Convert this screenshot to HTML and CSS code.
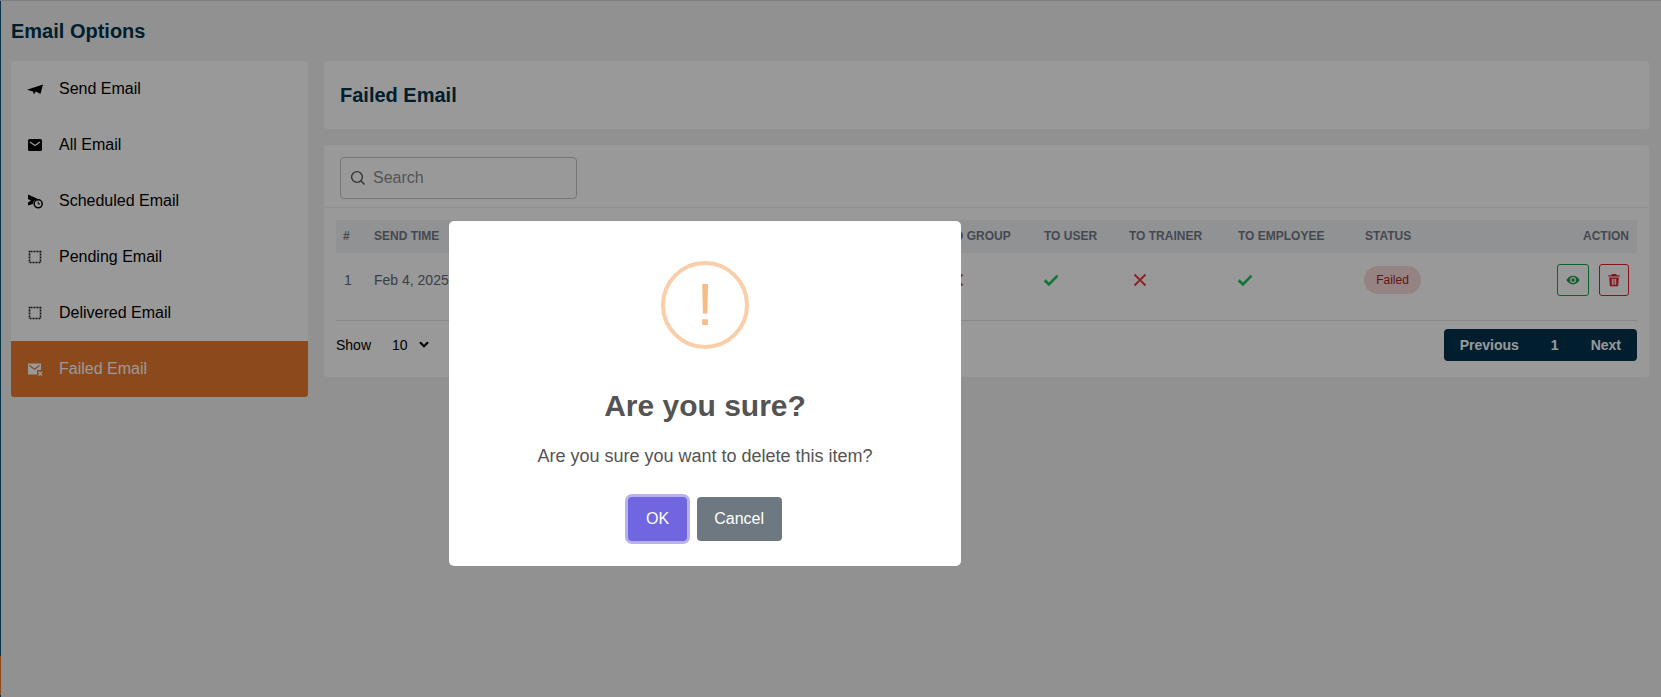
FILE: index.html
```html
<!DOCTYPE html>
<html lang="en">
<head>
<meta charset="utf-8">
<title>Failed Email</title>
<link rel="stylesheet" href="styles.css">
</head>
<body>
<div class="app">
  <div class="rail"><div class="rail-active"></div></div>
  <div class="page">
    <h1 class="page-title">Email Options</h1>
    <div class="columns">
      <nav class="side">
        <a class="side-item">
          <svg class="side-icon" viewBox="0 0 16 16"><path d="M0 8.800 16 3.600 13.400 13 9 10.600 6.800 13.200 6 10.400Z"/></svg>
          <span>Send Email</span>
        </a>
        <a class="side-item">
          <svg class="side-icon" viewBox="0 0 16 16"><rect x="1" y="2" width="14" height="12" rx="1.500"/><path d="M3 5 8 8.400 13 5" fill="none" stroke="#fff" stroke-width="1.200"/></svg>
          <span>All Email</span>
        </a>
        <a class="side-item">
          <svg class="side-icon" viewBox="0 0 16 16"><path d="M1 1.500 11 6 7.500 7.500A5 5 0 0 0 6 11L1 12.500 1 9.500 4 7.500 1 6Z"/><circle cx="11.200" cy="10.800" r="4" fill="none" stroke="#000" stroke-width="1.500"/><path d="M11.200 8.600V11H13" fill="none" stroke="#000" stroke-width="1"/></svg>
          <span>Scheduled Email</span>
        </a>
        <a class="side-item">
          <svg class="side-icon" viewBox="0 0 16 16"><rect x="2.500" y="2.500" width="11" height="11" class="dotted"/></svg>
          <span>Pending Email</span>
        </a>
        <a class="side-item">
          <svg class="side-icon" viewBox="0 0 16 16"><rect x="2.500" y="2.500" width="11" height="11" class="dotted"/></svg>
          <span>Delivered Email</span>
        </a>
        <a class="side-item is-active">
          <svg class="side-icon" viewBox="0 0 16 16"><path d="M1 2.500H14V9H10V13.500H1Z" fill="#fff"/><path d="M2.500 4.500 7.500 8.300 12.500 4.500" fill="none" stroke="#e97b2f" stroke-width="1.300"/><path d="M11.500 10.800 15 14.500M15 10.800 11.500 14.500" fill="none" stroke="#fff" stroke-width="1.400"/></svg>
          <span>Failed Email</span>
        </a>
      </nav>
      <main class="content">
        <header class="card head-card"><h2 class="head-title">Failed Email</h2></header>
        <section class="card table-card">
          <div class="toolbar">
            <label class="search">
              <svg class="search-icon" viewBox="0 0 16 16"><circle cx="7" cy="7" r="5.400" fill="none" stroke="#555" stroke-width="1.400"/><path d="M11 11 14.600 14.600" stroke="#555" stroke-width="1.400"/></svg>
              <input class="search-input" type="text" placeholder="Search">
            </label>
          </div>
          <div class="table-wrap">
            <table class="grid">
              <colgroup>
                <col class="c-num"><col class="c-time"><col class="c-subject"><col class="c-group"><col class="c-user"><col class="c-trainer"><col class="c-emp"><col class="c-status"><col class="c-action">
              </colgroup>
              <thead>
                <tr><th>#</th><th>SEND TIME</th><th>SUBJECT</th><th>TO GROUP</th><th>TO USER</th><th>TO TRAINER</th><th>TO EMPLOYEE</th><th>STATUS</th><th class="right">ACTION</th></tr>
              </thead>
              <tbody>
                <tr>
                  <td class="num">1</td>
                  <td>Feb 4, 2025</td>
                  <td>Test email</td>
                  <td class="inset-g"><svg class="mark" viewBox="0 0 14 14"><path d="M1.500 1.500 12.500 12.500M12.500 1.500 1.500 12.500" class="cross"/></svg></td>
                  <td><svg class="mark" viewBox="0 0 14 14"><path d="M.6 7.400 5 11.400 13.500 2.600" class="tick"/></svg></td>
                  <td class="inset"><svg class="mark" viewBox="0 0 14 14"><path d="M1.500 1.500 12.500 12.500M12.500 1.500 1.500 12.500" class="cross"/></svg></td>
                  <td><svg class="mark" viewBox="0 0 14 14"><path d="M.6 7.400 5 11.400 13.500 2.600" class="tick"/></svg></td>
                  <td class="status"><span class="badge">Failed</span></td>
                  <td class="right">
                    <div class="actions">
                      <button class="act act-view" type="button"><svg viewBox="0 0 16 16" class="act-icon"><path fill="currentColor" fill-rule="evenodd" d="M8 3C4.600 3 1.800 5.200.5 8c1.300 2.800 4.100 5 7.500 5s6.200-2.200 7.500-5C14.200 5.200 11.400 3 8 3Zm0 8.400A3.400 3.400 0 1 1 8 4.600a3.400 3.400 0 0 1 0 6.800Z"/><circle cx="8" cy="8" r="2" fill="currentColor"/></svg></button>
                      <button class="act act-del" type="button"><svg viewBox="0 0 16 16" class="act-icon"><path fill="currentColor" fill-rule="evenodd" d="M5.500 1h5l.6 1.500H14.500V4H1.500V2.500H4.900ZM2.500 5h11l-.8 10H3.300ZM5.500 6.500V13.500H6.700V6.500ZM7.400 6.500V13.500H8.600V6.500ZM9.300 6.500V13.500H10.500V6.500Z"/></svg></button>
                    </div>
                  </td>
                </tr>
              </tbody>
            </table>
            <div class="foot">
              <div class="show">
                <span>Show</span>
                <span class="show-value">10</span>
                <svg class="chev" viewBox="0 0 10 7"><path d="M1 1.200 5 5.200 9 1.200" fill="none" stroke="#000" stroke-width="2.200"/></svg>
              </div>
              <div class="pager">
                <button class="pg" type="button">Previous</button>
                <button class="pg" type="button">1</button>
                <button class="pg" type="button">Next</button>
              </div>
            </div>
          </div>
        </section>
      </main>
    </div>
  </div>
</div>

<div class="overlay">
  <div class="modal">
    <div class="alert-ring"><span class="alert-mark">!</span></div>
    <h2 class="modal-title">Are you sure?</h2>
    <p class="modal-text">Are you sure you want to delete this item?</p>
    <div class="modal-actions">
      <button class="btn btn-ok" type="button">OK</button>
      <button class="btn btn-cancel" type="button">Cancel</button>
    </div>
  </div>
</div>
</body>
</html>
```

FILE: styles.css
```css
* { box-sizing: border-box; }
html, body { margin: 0; height: 100%; }
body {
  font-family: "Liberation Sans", Arial, sans-serif;
  background: #f2f2f3;
  color: #000;
  overflow: hidden;
}
.app { display: flex; height: 697px; border-top: 1px solid #d0d2d2; }
.rail { width: 1px; background: #0f5a7c; flex: none; display: flex; flex-direction: column; padding-top: 655px; }
.rail-active { height: 39px; background: #e97b2f; }
.page { flex: 1; padding: 0 12px 0 10px; }
.page-title {
  margin: 0;
  height: 60px;
  font-size: 20px;
  font-weight: 700;
  line-height: 60px;
  color: #00324d;
}
.columns { display: flex; gap: 16px; align-items: flex-start; }
.side { width: 297px; flex: none; background: #fff; border-radius: 3px; overflow: hidden; }
.side-item {
  display: flex;
  align-items: center;
  height: 56px;
  padding-left: 16px;
  gap: 16px;
  font-size: 16px;
  color: #000;
}
.side-item.is-active { background: #e97b2f; color: #fff; }
.side-icon { width: 16px; height: 16px; flex: none; }
.dotted { fill: none; stroke: #1c1c1c; stroke-width: 1.600; stroke-dasharray: 1 .5; }
.content { flex: 1; min-width: 0; display: flex; flex-direction: column; gap: 16px; }
.card { background: #fff; border-radius: 3px; }
.head-card { height: 68px; padding: 0 16px; display: flex; align-items: center; }
.head-title { margin: 0; font-size: 20px; font-weight: 700; color: #00324d; }
.table-card { height: 232px; }
.toolbar { height: 63px; padding: 12px 16px 0; border-bottom: 1px solid #f2f2f3; }
.search {
  display: flex;
  align-items: center;
  gap: 7px;
  width: 237px;
  height: 42px;
  padding: 0 9px;
  border: 1px solid #c4c4c4;
  border-radius: 4px;
}
.search-icon { width: 16px; height: 16px; flex: none; }
.search-input {
  flex: 1;
  min-width: 0;
  border: 0;
  outline: 0;
  padding: 0;
  background: transparent;
  font: 16px "Liberation Sans", Arial, sans-serif;
}
.search-input::placeholder { color: #8a8c90; opacity: 1; }
.table-wrap { padding: 12px 12px 0; }
.grid { width: 100%; table-layout: fixed; border-collapse: collapse; }
.c-num { width: 31px; }
.c-time { width: 120px; }
.c-subject { width: 453px; }
.c-group { width: 97px; }
.c-user { width: 85px; }
.c-trainer { width: 109px; }
.c-emp { width: 127px; }
.c-status { width: 100px; }
.grid th {
  height: 33px;
  padding: 0 7px 1px;
  background: #f2f4f7;
  font-size: 12px;
  font-weight: 700;
  text-align: left;
  color: #727a85;
  white-space: nowrap;
}
.grid th:last-child { padding-right: 8px; }
.grid td {
  height: 67px;
  padding: 0 7px 12px;
  font-size: 14px;
  color: #5f6975;
  border-bottom: 1px solid #e2e2e2;
  white-space: nowrap;
}
.grid td:last-child { padding-right: 8px; }
.grid .right { text-align: right; }
.grid .inset { padding-left: 11px; }
.grid .inset-g { padding-left: 10px; }
.grid .num { padding-left: 8px; }
.grid .status { padding-left: 6px; }
.mark { display: block; width: 14px; height: 14px; }
.cross { fill: none; stroke: #ef3d45; stroke-width: 2; }
.tick { fill: none; stroke: #22c55e; stroke-width: 2.800; }
.badge {
  display: inline-block;
  width: 57px;
  height: 28px;
  line-height: 28px;
  text-align: center;
  border-radius: 14px;
  font-size: 12px;
  color: #a81f1f;
  background: #f8d9da;
}
.actions { display: flex; justify-content: flex-end; gap: 10px; }
.act {
  display: flex;
  align-items: center;
  justify-content: center;
  padding: 0;
  height: 32px;
  background: transparent;
  border-radius: 3px;
  border: 1px solid currentColor;
}
.act-view { width: 32px; color: #1d9d50; }
.act-del { width: 30px; color: #e0202c; }
.act-icon { width: 14px; height: 14px; }
.foot { display: flex; align-items: center; justify-content: space-between; padding-top: 8px; }
.show { display: flex; align-items: center; font-size: 14px; }
.show-value { margin-left: 21px; }
.chev { width: 10px; height: 7px; margin-left: 11px; }
.pager { display: flex; background: #00324d; border-radius: 4px; height: 32px; }
.pg {
  padding: 0 16px;
  border: 0;
  background: transparent;
  color: #fff;
  font: 700 14px "Liberation Sans", Arial, sans-serif;
}
.overlay { position: fixed; inset: 0; background: rgba(0, 0, 0, .4); }
.modal {
  position: absolute;
  left: 449px;
  top: 221px;
  width: 512px;
  height: 345px;
  background: #fff;
  border-radius: 5px;
  padding-top: 40px;
  text-align: center;
  color: #545454;
}
.alert-ring {
  width: 88px;
  height: 88px;
  margin: 0 auto;
  border: 4px solid #facea8;
  border-radius: 50%;
  display: flex;
  align-items: center;
  justify-content: center;
}
.alert-mark { font-size: 60px; line-height: 80px; color: #f8bb86; }
.modal-title { margin: 39px 0 0; font-size: 30px; line-height: 35px; font-weight: 700; color: #545454; }
.modal-text { margin: 20px 0 0; font-size: 18px; line-height: 27px; }
.modal-actions { display: flex; justify-content: center; gap: 10px; margin-top: 27px; }
.btn {
  height: 44px;
  padding: 0 17.6px;
  border: 0;
  border-radius: 4px;
  color: #fff;
  font: 16px "Liberation Sans", Arial, sans-serif;
}
.btn-ok { background: #7066e0; box-shadow: 0 0 0 3px rgba(112, 102, 224, .5); }
.btn-cancel { background: #6e7881; }
```
